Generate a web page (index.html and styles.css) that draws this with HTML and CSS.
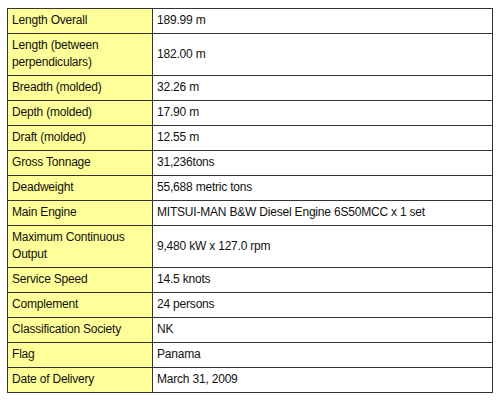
FILE: index.html
```html
<!DOCTYPE html>
<html>
<head>
<meta charset="utf-8">
<link rel="stylesheet" href="styles.css">
</head>
<body>
<table class="spec">
<tr><th>Length Overall</th><td>189.99 m</td></tr>
<tr><th>Length (between perpendiculars)</th><td>182.00 m</td></tr>
<tr><th>Breadth (molded)</th><td>32.26 m</td></tr>
<tr><th>Depth (molded)</th><td>17.90 m</td></tr>
<tr><th>Draft (molded)</th><td>12.55 m</td></tr>
<tr><th>Gross Tonnage</th><td>31,236tons</td></tr>
<tr><th>Deadweight</th><td>55,688 metric tons</td></tr>
<tr><th>Main Engine</th><td>MITSUI-MAN B&amp;W Diesel Engine 6S50MCC x 1 set</td></tr>
<tr><th>Maximum Continuous Output</th><td>9,480 kW x 127.0 rpm</td></tr>
<tr><th>Service Speed</th><td>14.5 knots</td></tr>
<tr><th>Complement</th><td>24 persons</td></tr>
<tr><th>Classification Society</th><td>NK</td></tr>
<tr><th>Flag</th><td>Panama</td></tr>
<tr><th>Date of Delivery</th><td>March 31, 2009</td></tr>
</table>
</body>
</html>
```
FILE: styles.css
```css
body {
  margin: 8px 0 0 7px;
  background: #fff;
  font-family: "Liberation Sans", Arial, sans-serif;
  font-size: 12px;
  letter-spacing: -0.2px;
  color: #111;
}
.spec {
  border-collapse: collapse;
  width: 486px;
  table-layout: fixed;
}
.spec th, .spec td {
  border: 1px solid #333;
  padding: 3px 4px 4px;
  line-height: 17px;
  text-align: left;
  font-weight: normal;
  vertical-align: middle;
}
.spec th {
  width: 136px;
  background: #ffff99;
}
.spec td {
  background: #fff;
}
```
